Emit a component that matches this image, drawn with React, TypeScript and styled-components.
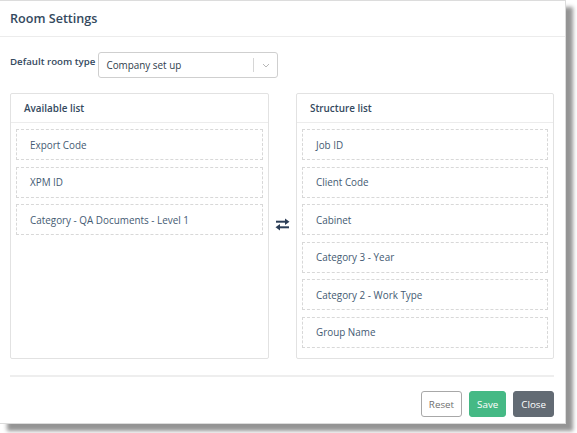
import React from 'react';
import styled, { createGlobalStyle } from 'styled-components';

const GlobalStyle = createGlobalStyle`
  html, body {
    margin: 0;
    padding: 0;
    background: #ffffff;
  }
  body {
    font-family: 'Open Sans', 'Noto Sans', sans-serif;
    color: #34495e;
  }
`;

const Page = styled.div`
  width: 577px;
  height: 433px;
`;

const Modal = styled.div`
  width: 566px;
  height: 424px;
  box-sizing: border-box;
  background: #ffffff;
  border: 1px solid #dcdcdc;
  border-left: none;
  box-shadow: 7px 7px 4px rgba(0, 0, 0, 0.42);
  display: flex;
  flex-direction: column;
`;

const Header = styled.div`
  height: 36px;
  box-sizing: border-box;
  padding: 0 10px;
  display: flex;
  align-items: center;
  border-bottom: 1px solid #ececec;
`;

const Title = styled.h1`
  margin: 0;
  font-size: 12.6px;
  font-weight: 600;
  color: #34495e;
`;

const Body = styled.div`
  padding: 15px 11px 0 10px;
  display: flex;
  flex-direction: column;
`;

const TypeRow = styled.div`
  display: flex;
  align-items: flex-start;
  gap: 3px;
`;

const Label = styled.label`
  font-size: 9.7px;
  font-weight: 600;
  padding-top: 3px;
  color: #34495e;
`;

const Select = styled.div`
  width: 180px;
  height: 26px;
  box-sizing: border-box;
  border: 1px solid #cfcfcf;
  border-radius: 3px;
  display: flex;
  align-items: center;
  padding-left: 7px;
  font-size: 9.9px;
  color: #2f3d4c;
`;

const SelectValue = styled.span`
  flex: 1;
`;

const SelectSep = styled.span`
  width: 1px;
  height: 14px;
  background: #d6d6d6;
`;

const SelectArrow = styled.span`
  width: 23px;
  display: flex;
  justify-content: center;
  color: #b8b8b8;
`;

const Lists = styled.div`
  margin-top: 15px;
  display: grid;
  grid-template-columns: 259px 1fr 258px;
`;

const Panel = styled.div`
  height: 266px;
  box-sizing: border-box;
  border: 1px solid #e2e2e2;
  border-radius: 2px;
  display: flex;
  flex-direction: column;
`;

const PanelHead = styled.div`
  height: 29px;
  box-sizing: border-box;
  padding: 0 13px;
  display: flex;
  align-items: center;
  font-size: 9.9px;
  font-weight: 600;
  color: #34495e;
  border-bottom: 1px solid #ececec;
`;

const Items = styled.div`
  padding: 6px 5px;
  display: flex;
  flex-direction: column;
  gap: 6.6px;
`;

const Item = styled.div`
  height: 31px;
  box-sizing: border-box;
  border: 1px dashed #d8d8d8;
  padding: 0 13px;
  display: flex;
  align-items: center;
  font-size: 9.9px;
  color: #445a72;
`;

const Swap = styled.div`
  display: flex;
  align-items: center;
  justify-content: center;
  padding-bottom: 4px;
`;

const Footer = styled.div`
  margin: 16px 11px 0 10px;
  padding-top: 14px;
  border-top: 2px solid #eeeeee;
  display: flex;
  justify-content: flex-end;
  gap: 7px;
`;

const Button = styled.button<{ $tone: 'plain' | 'save' | 'close' }>`
  height: 26px;
  box-sizing: border-box;
  padding: 0 7px;
  border-radius: 3px;
  font-family: inherit;
  font-size: 9.8px;
  border: 1px solid
    ${(p) => (p.$tone === 'plain' ? '#a8a8a8' : p.$tone === 'save' ? '#45b985' : '#636b74')};
  background: ${(p) => (p.$tone === 'plain' ? '#ffffff' : p.$tone === 'save' ? '#45b985' : '#636b74')};
  color: ${(p) => (p.$tone === 'plain' ? '#6f6f6f' : '#ffffff')};
`;

const available = ['Export Code', 'XPM ID', 'Category - QA Documents - Level 1'];
const structure = [
  'Job ID',
  'Client Code',
  'Cabinet',
  'Category 3 - Year',
  'Category 2 - Work Type',
  'Group Name',
];

const App: React.FC = () => {
  return (
    <Page>
      <GlobalStyle />
      <Modal>
        <Header>
          <Title>Room Settings</Title>
        </Header>
        <Body>
          <TypeRow>
            <Label>Default room type</Label>
            <Select>
              <SelectValue>Company set up</SelectValue>
              <SelectSep />
              <SelectArrow>
                <svg width="8" height="5" viewBox="0 0 8 5">
                  <path d="M1 1 L4 4 L7 1" fill="none" stroke="currentColor" strokeWidth="1" />
                </svg>
              </SelectArrow>
            </Select>
          </TypeRow>
          <Lists>
            <Panel>
              <PanelHead>Available list</PanelHead>
              <Items>
                {available.map((name) => (
                  <Item key={name}>{name}</Item>
                ))}
              </Items>
            </Panel>
            <Swap>
              <svg width="15" height="13" viewBox="0 0 15 13">
                <path d="M1 3.7 H12" stroke="#2c3e57" strokeWidth="2" />
                <path d="M10 0.5 L14.5 3.7 L10 6.9" fill="#2c3e57" />
                <path d="M14 9.3 H3" stroke="#2c3e57" strokeWidth="2" />
                <path d="M5 6.1 L0.5 9.3 L5 12.5" fill="#2c3e57" />
              </svg>
            </Swap>
            <Panel>
              <PanelHead>Structure list</PanelHead>
              <Items>
                {structure.map((name) => (
                  <Item key={name}>{name}</Item>
                ))}
              </Items>
            </Panel>
          </Lists>
        </Body>
        <Footer>
          <Button $tone="plain">Reset</Button>
          <Button $tone="save">Save</Button>
          <Button $tone="close">Close</Button>
        </Footer>
      </Modal>
    </Page>
  );
};

export default App;
